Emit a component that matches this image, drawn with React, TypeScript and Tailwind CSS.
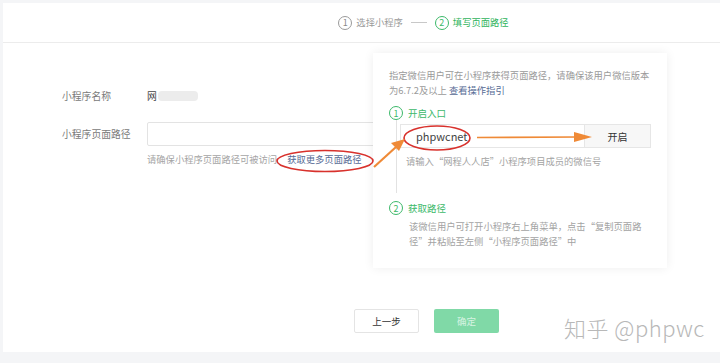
import React from "react";

const font = { fontFamily: '"Noto Sans CJK SC", "Noto Sans", sans-serif' };

const StepNo = ({ n, active }: { n: number; active?: boolean }) => (
  <span
    className={`flex items-center justify-center w-[14px] h-[14px] rounded-full border text-[9px] leading-none ${
      active ? "border-[#3cb96a] text-[#3cb96a]" : "border-[#9a9a9a] text-[#8a8a8a]"
    }`}
  >
    {n}
  </span>
);

function Marks() {
  return (
    <svg
      className="absolute left-0 top-0 pointer-events-none"
      width="720"
      height="363"
      viewBox="0 0 720 363"
    >
      <ellipse cx="325" cy="161" rx="48" ry="10.5" fill="none" stroke="#d8312c" strokeWidth="1.6" />
      <ellipse cx="437" cy="138" rx="33" ry="12" fill="none" stroke="#d8312c" strokeWidth="1.6" />
      {/* arrow into the field */}
      <path d="M477 137.5 L578 137" stroke="#ef8a37" strokeWidth="1.6" fill="none" />
      <path d="M574 132 L592 137 L574 142 Z" fill="#ef8a37" />
      {/* arrow from link to field */}
      <path d="M374 167 L396 147" stroke="#ef8a37" strokeWidth="2.2" fill="none" />
      <path d="M391 143 L405 139 L399 151 Z" fill="#ef8a37" />
    </svg>
  );
}

function Popover() {
  return (
    <div className="absolute left-[373px] top-[53px] w-[294px] h-[215px] bg-white shadow-[0_0_10px_rgba(0,0,0,0.07)] px-[16px]">
      <div className="pt-[15px] text-[9.3px] leading-[15px] text-[#9a9a9a]">
        指定微信用户可在小程序获得页面路径，请确保该用户微信版本
        <br />
        为6.7.2及以上 <span className="text-[#576b95]">查看操作指引</span>
      </div>

      <div className="mt-[8px] flex items-center gap-[5px] h-[14px]">
        <StepNo n={1} active />
        <span className="text-[9.5px] text-[#3cb96a]">开启入口</span>
      </div>
      <div className="ml-[7px] border-l border-[#e2e2e2] pl-[3px] pt-[4px] h-[73px]">
        <div className="flex h-[24px] w-[251px] border border-[#e6e6e6]">
          <div className="flex-1 flex items-center pl-[15px] text-[11px] text-[#444]">phpwcnet</div>
          <div className="w-[66px] flex items-center justify-center bg-[#f7f7f7] border-l border-[#e6e6e6] text-[10px] text-[#333]">
            开启
          </div>
        </div>
        <div className="mt-[6px] pl-[6px] text-[9.3px] leading-[15px] text-[#a3a3a3]">
          请输入“网程人人店”小程序项目成员的微信号
        </div>
      </div>

      <div className="mt-[8px] flex items-center gap-[5px] h-[14px]">
        <StepNo n={2} active />
        <span className="text-[9.5px] text-[#3cb96a]">获取路径</span>
      </div>
      <div className="mt-[4px] pl-[20px] text-[9.3px] leading-[15px] text-[#a3a3a3]">
        该微信用户可打开小程序右上角菜单，点击“复制页面路
        <br />
        径”并粘贴至左侧“小程序页面路径”中
      </div>
    </div>
  );
}

export default function App() {
  return (
    <div className="relative w-[720px] h-[363px] overflow-hidden bg-[#f4f5f7] pt-[3px] pl-[3px]" style={font}>
      <div className="h-[349px] bg-white flex flex-col">
        <div className="h-[40px] border-b border-[#ececec] flex items-center justify-center pl-[124px] gap-[4px] text-[9.3px]">
          <StepNo n={1} />
          <span className="text-[#9a9a9a]">选择小程序</span>
          <span className="mx-[4px] w-[16px] h-px bg-[#c8c8c8]" />
          <StepNo n={2} active />
          <span className="text-[#2fb45c]">填写页面路径</span>
        </div>

        <div className="pl-[59px] pt-[45px]">
          <div className="flex items-center h-[16px] text-[9.8px]">
            <span className="w-[85px] text-[#7a7a7a]">小程序名称</span>
            <span className="text-[#444]">网</span>
            <span className="ml-[1px] w-[40px] h-[10px] rounded-sm bg-[#ececec]" />
          </div>
          <div className="mt-[18px] flex items-center h-[24px] text-[9.8px]">
            <span className="w-[85px] text-[#7a7a7a]">小程序页面路径</span>
            <div className="w-[260px] h-[24px] border border-[#e3e3e3] rounded-[2px]" />
          </div>
          <div className="mt-[6px] pl-[85px] h-[16px] flex items-center text-[9.3px] text-[#a5a5a5]">
            请确保小程序页面路径可被访问
            <span className="ml-[10px] text-[#576b95]">获取更多页面路径</span>
          </div>
        </div>

        <div className="mt-auto pb-[19px] flex justify-center pl-[130px] gap-[15px]">
          <div className="w-[65px] h-[24px] flex items-center justify-center border border-[#e4e4e4] rounded-[2px] bg-white text-[9.5px] text-[#333]">
            上一步
          </div>
          <div className="w-[65px] h-[24px] flex items-center justify-center rounded-[2px] bg-[#80d9a7] text-[9.5px] text-[#d6f3e2]">
            确定
          </div>
        </div>
      </div>

      <Popover />
      <Marks />

      <div className="absolute left-[564px] top-[313px] text-[22px] leading-[28px] text-[#b8b8b8] tracking-[0.5px]" style={{ ...font, fontWeight: 300 }}>
        知乎 @phpwc
      </div>
    </div>
  );
}
